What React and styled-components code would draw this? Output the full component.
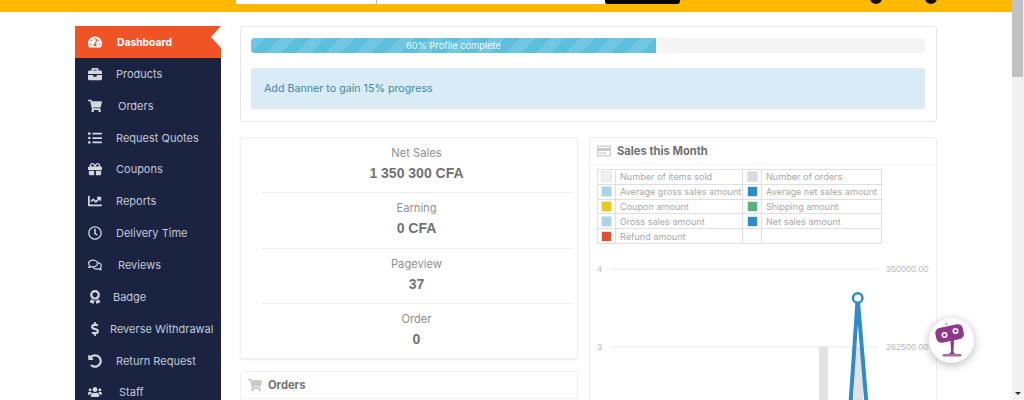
import React from "react";
import styled, { createGlobalStyle } from "styled-components";
import {
  FaTachometerAlt,
  FaBriefcase,
  FaShoppingCart,
  FaListUl,
  FaGift,
  FaChartLine,
  FaRegClock,
  FaRegComments,
  FaAward,
  FaDollarSign,
  FaUndoAlt,
  FaUsers,
  FaRegCreditCard,
} from "react-icons/fa";

const GlobalStyle = createGlobalStyle`
  html, body {
    margin: 0;
    height: 400px;
    overflow: hidden;
    background: #fff;
  }
  * { box-sizing: border-box; }
`;

const menuItems = [
  { label: "Dashboard", icon: FaTachometerAlt, gap: 14, active: true },
  { label: "Products", icon: FaBriefcase, gap: 13 },
  { label: "Orders", icon: FaShoppingCart, gap: 15 },
  { label: "Request Quotes", icon: FaListUl, gap: 13 },
  { label: "Coupons", icon: FaGift, gap: 13 },
  { label: "Reports", icon: FaChartLine, gap: 13 },
  { label: "Delivery Time", icon: FaRegClock, gap: 13 },
  { label: "Reviews", icon: FaRegComments, gap: 15 },
  { label: "Badge", icon: FaAward, gap: 10 },
  { label: "Reverse Withdrawal", icon: FaDollarSign, gap: 7 },
  { label: "Return Request", icon: FaUndoAlt, gap: 13 },
  { label: "Staff", icon: FaUsers, gap: 16 },
];

const stats = [
  { label: "Net Sales", value: "1 350 300 CFA" },
  { label: "Earning", value: "0 CFA" },
  { label: "Pageview", value: "37" },
  { label: "Order", value: "0" },
];

const legend = [
  ["Number of items sold", "#efefef", "Number of orders", "#dcdcdc"],
  ["Average gross sales amount", "#a9d4ea", "Average net sales amount", "#2f8ccb"],
  ["Coupon amount", "#eec519", "Shipping amount", "#58b282"],
  ["Gross sales amount", "#a9d4ea", "Net sales amount", "#2f8ccb"],
  ["Refund amount", "#e2512f", "", null],
];

const Page = styled.div`
  width: 1024px;
  height: 400px;
  position: relative;
  overflow: hidden;
  font-family: Inter, "Open Sans", sans-serif;
`;

const Viewport = styled.div`
  width: 1012px;
  height: 400px;
  overflow: hidden;
`;

const TopBar = styled.header`
  height: 12px;
  background: #fdb900;
  display: flex;
  align-items: flex-start;
  padding-left: 236px;
  overflow: hidden;
`;

const SearchInput = styled.div`
  width: 141px;
  height: 4px;
  background: #fff;
  border-right: 1px solid #bbb;
`;

const SearchSelect = styled.div`
  width: 228px;
  height: 4px;
  background: #fff;
`;

const SearchButton = styled.div`
  width: 75px;
  height: 4px;
  background: #050505;
  border-radius: 0 0 3px 3px;
`;

const HeaderIcons = styled.div`
  margin-left: 190px;
  display: flex;
  gap: 43px;
`;

const IconStub = styled.span`
  width: 12px;
  height: 12px;
  margin-top: -8px;
  background: #111;
  border-radius: 50%;
`;

const Layout = styled.div`
  display: flex;
  align-items: flex-start;
  padding: 14px 0 0 75px;
`;

const Sidebar = styled.nav`
  width: 146px;
  flex: none;
  background: #1a2340;
  height: 400px;
`;

const MenuItem = styled.a`
  height: ${(p) => (p.$active ? "32px" : "31.85px")};
  display: flex;
  align-items: center;
  padding-left: 13px;
  font-size: ${(p) => (p.$active ? "10.3px" : "11px")};
  font-weight: ${(p) => (p.$active ? 700 : 400)};
  color: ${(p) => (p.$active ? "#fff" : "#c3c9d8")};
  background: ${(p) => (p.$active ? "#f05426" : "transparent")};
  white-space: nowrap;
  position: relative;
`;

const Notch = styled.span`
  position: absolute;
  right: 0;
  top: 0;
  width: 10px;
  height: 22px;
  background: #fff;
  clip-path: polygon(100% 0, 100% 100%, 0 50%);
`;

const MenuIcon = styled.span`
  width: 15px;
  flex: none;
  display: flex;
  justify-content: flex-start;
  font-size: 14px;
  color: ${(p) => (p.$active ? "#fff" : "#d4d7de")};
  margin-right: ${(p) => p.$gap}px;
`;

const Content = styled.main`
  width: 697px;
  margin-left: 19px;
  flex: none;
`;

const Panel = styled.section`
  background: #fff;
  border: 1px solid #e8e8e8;
  border-radius: 3px;
`;

const ProgressPanel = styled(Panel)`
  height: 96px;
  padding: 11px 11px 0 10px;
  margin-bottom: 15px;
`;

const ProgressTrack = styled.div`
  height: 15px;
  background: #f5f5f5;
  border-radius: 4px;
  overflow: hidden;
`;

const ProgressBar = styled.div`
  height: 100%;
  width: 405px;
  color: #f2fafd;
  font-size: 9.3px;
  line-height: 15px;
  text-align: center;
  background-color: #5bbfdd;
  background-image: linear-gradient(
    135deg,
    rgba(255, 255, 255, 0.13) 25%,
    transparent 25%,
    transparent 50%,
    rgba(255, 255, 255, 0.13) 50%,
    rgba(255, 255, 255, 0.13) 75%,
    transparent 75%,
    transparent
  );
  background-size: 30px 30px;
`;

const Notice = styled.div`
  height: 41px;
  margin-top: 15px;
  padding: 0 13px;
  display: flex;
  align-items: center;
  background: #d9ebf6;
  border-radius: 3px;
  color: #3f8a9e;
  font-size: 10.7px;
`;

const Columns = styled.div`
  display: grid;
  grid-template-columns: 338px 348px;
  gap: 11px;
  align-items: start;
`;

const Column = styled.div`
  display: flex;
  flex-direction: column;
  gap: 12px;
`;

const StatsCard = styled(Panel)`
  height: 222px;
  padding: 0 6px 0 21px;
  box-shadow: 0 1px 2px rgba(0, 0, 0, 0.08);
  border-color: #f0f0f0;
`;

const StatRow = styled.div`
  height: 55.25px;
  text-align: center;
  padding-top: 8px;
  border-bottom: ${(p) => (p.$last ? "0" : "1px solid #eeeeee")};
`;

const StatLabel = styled.div`
  font-size: 11.2px;
  line-height: 15px;
  color: #8f8f8f;
`;

const StatValue = styled.div`
  margin-top: 4px;
  font-family: "Liberation Sans", Arial, sans-serif;
  font-size: 14px;
  line-height: 17px;
  font-weight: 700;
  color: #727272;
`;

const CardTitle = styled.div`
  height: 27px;
  display: flex;
  align-items: center;
  gap: 6px;
  padding: 0 0 1px 7px;
  font-size: 11.2px;
  font-weight: 700;
  color: #727272;
  border-bottom: 1px solid #f3f3f3;

  svg {
    font-size: 14px;
    color: #c9c9c9;
  }
`;

const OrdersCard = styled(Panel)`
  height: 60px;
  border-color: #f0f0f0;
`;

const ChartCard = styled(Panel)`
  height: 300px;
  border-color: #eeeeee;
  overflow: hidden;
`;

const LegendTable = styled.table`
  border-collapse: collapse;
  margin: 4px 0 0 7px;
  width: 284px;
  table-layout: fixed;
  font-size: 9.1px;
  color: #a8a8a8;

  td {
    height: 14.8px;
    padding: 0;
    border: 1px solid #dfdfdf;
    white-space: nowrap;
    overflow: hidden;
  }
`;

const SwatchCol = styled.col`
  width: ${(p) => p.$w}px;
`;

const SwatchCell = styled.td`
  text-align: center;
`;

const TextCell = styled.td`
  padding-left: 4px !important;
`;

const Swatch = styled.span`
  display: block;
  margin: 0 auto;
  width: 11px;
  height: 11px;
  border: 1px solid #e6e6e6;
  background: ${(p) => p.$color};
`;

const ChartSvg = styled.svg`
  display: block;
  width: 346px;
  height: 160px;
`;

const AxisText = styled.text`
  font-family: "Liberation Sans", Arial, sans-serif;
  font-size: 9px;
  fill: #bbbbbb;
`;

const Scrollbar = styled.div`
  position: absolute;
  right: 0;
  top: 0;
  width: 12px;
  height: 400px;
  background: #f1f1f1;
`;

const ScrollThumb = styled.div`
  position: absolute;
  top: 0;
  left: 0;
  width: 11px;
  height: 77px;
  background: #c1c1c1;
`;

const ScrollArrow = styled.span`
  position: absolute;
  left: 3px;
  bottom: 5px;
  border-left: 3px solid transparent;
  border-right: 3px solid transparent;
  border-top: 3px solid #303030;
`;

const ChatBubble = styled.div`
  position: absolute;
  left: 929px;
  top: 318px;
  width: 45px;
  height: 45px;
  border-radius: 50%;
  background: #fff;
  box-shadow: 0 2px 10px rgba(0, 0, 0, 0.28);
  display: flex;
  align-items: center;
  justify-content: center;
`;

const RobotSvg = styled.svg`
  overflow: visible;
`;

function Chart() {
  return (
    <ChartSvg viewBox="0 0 346 160">
      <AxisText x="7" y="28">4</AxisText>
      <line x1="21" y1="25" x2="288" y2="25" stroke="#e6e6e6" />
      <AxisText x="296" y="28">350000.00</AxisText>
      <AxisText x="7" y="106">3</AxisText>
      <line x1="21" y1="103" x2="288" y2="103" stroke="#e6e6e6" />
      <AxisText x="296" y="106">262500.00</AxisText>
      <rect x="229" y="103" width="9" height="57" fill="#e1e3e3" />
      <rect x="264" y="103" width="9" height="57" fill="#e1e3e3" />
      <path d="M260.5 160 L267.7 54 L276.5 160" fill="none" stroke="#2f8ccb" strokeWidth="4" />
      <circle cx="267.7" cy="54" r="4.75" fill="#fff" stroke="#2f8ccb" strokeWidth="2.5" />
    </ChartSvg>
  );
}

function RobotLogo() {
  return (
    <RobotSvg width="30" height="36" viewBox="0 0 30 36">
      <circle cx="9.5" cy="1" r="1" fill="#b5a13a" />
      <rect x="-1.5" y="3" width="28" height="15" rx="5" fill="#8e3a8c" transform="rotate(-12 12.5 10)" />
      <circle cx="7.5" cy="12" r="3" fill="#fff" />
      <circle cx="7.5" cy="12" r="1.4" fill="#8e3a8c" />
      <circle cx="18.5" cy="8" r="3" fill="#fff" />
      <circle cx="18.5" cy="8" r="1.4" fill="#8e3a8c" />
      <path d="M13.5 17 L17 16.5 L16.5 29 L18 31 L12 31 L14 29 Z" fill="#8e3a8c" />
      <rect x="5.5" y="31" width="19" height="2.5" rx="1.2" fill="#a86aa6" />
    </RobotSvg>
  );
}

export default function App() {
  return (
    <Page>
      <GlobalStyle />
      <Viewport>
        <TopBar>
          <SearchInput />
          <SearchSelect />
          <SearchButton />
          <HeaderIcons>
            <IconStub />
            <IconStub />
          </HeaderIcons>
        </TopBar>
        <Layout>
          <Sidebar>
            {menuItems.map((item) => {
              const Icon = item.icon;
              return (
                <MenuItem key={item.label} $active={item.active}>
                  <MenuIcon $active={item.active} $gap={item.gap}>
                    <Icon />
                  </MenuIcon>
                  {item.label}
                  {item.active && <Notch />}
                </MenuItem>
              );
            })}
          </Sidebar>
          <Content>
            <ProgressPanel>
              <ProgressTrack>
                <ProgressBar>60% Profile complete</ProgressBar>
              </ProgressTrack>
              <Notice>Add Banner to gain 15% progress</Notice>
            </ProgressPanel>
            <Columns>
              <Column>
                <StatsCard>
                  {stats.map((s, i) => (
                    <StatRow key={s.label} $last={i === stats.length - 1}>
                      <StatLabel>{s.label}</StatLabel>
                      <StatValue>{s.value}</StatValue>
                    </StatRow>
                  ))}
                </StatsCard>
                <OrdersCard>
                  <CardTitle>
                    <FaShoppingCart />
                    Orders
                  </CardTitle>
                </OrdersCard>
              </Column>
              <ChartCard>
                <CardTitle>
                  <FaRegCreditCard />
                  Sales this Month
                </CardTitle>
                <LegendTable>
                  <colgroup>
                    <SwatchCol $w={18} />
                    <SwatchCol $w={127} />
                    <SwatchCol $w={19} />
                    <SwatchCol $w={120} />
                  </colgroup>
                  <tbody>
                    {legend.map((row) => (
                      <tr key={row[0]}>
                        <SwatchCell><Swatch $color={row[1]} /></SwatchCell>
                        <TextCell>{row[0]}</TextCell>
                        <SwatchCell>{row[3] && <Swatch $color={row[3]} />}</SwatchCell>
                        <TextCell>{row[2]}</TextCell>
                      </tr>
                    ))}
                  </tbody>
                </LegendTable>
                <Chart />
              </ChartCard>
            </Columns>
          </Content>
        </Layout>
      </Viewport>
      <Scrollbar>
        <ScrollThumb />
        <ScrollArrow />
      </Scrollbar>
      <ChatBubble>
        <RobotLogo />
      </ChatBubble>
    </Page>
  );
}
